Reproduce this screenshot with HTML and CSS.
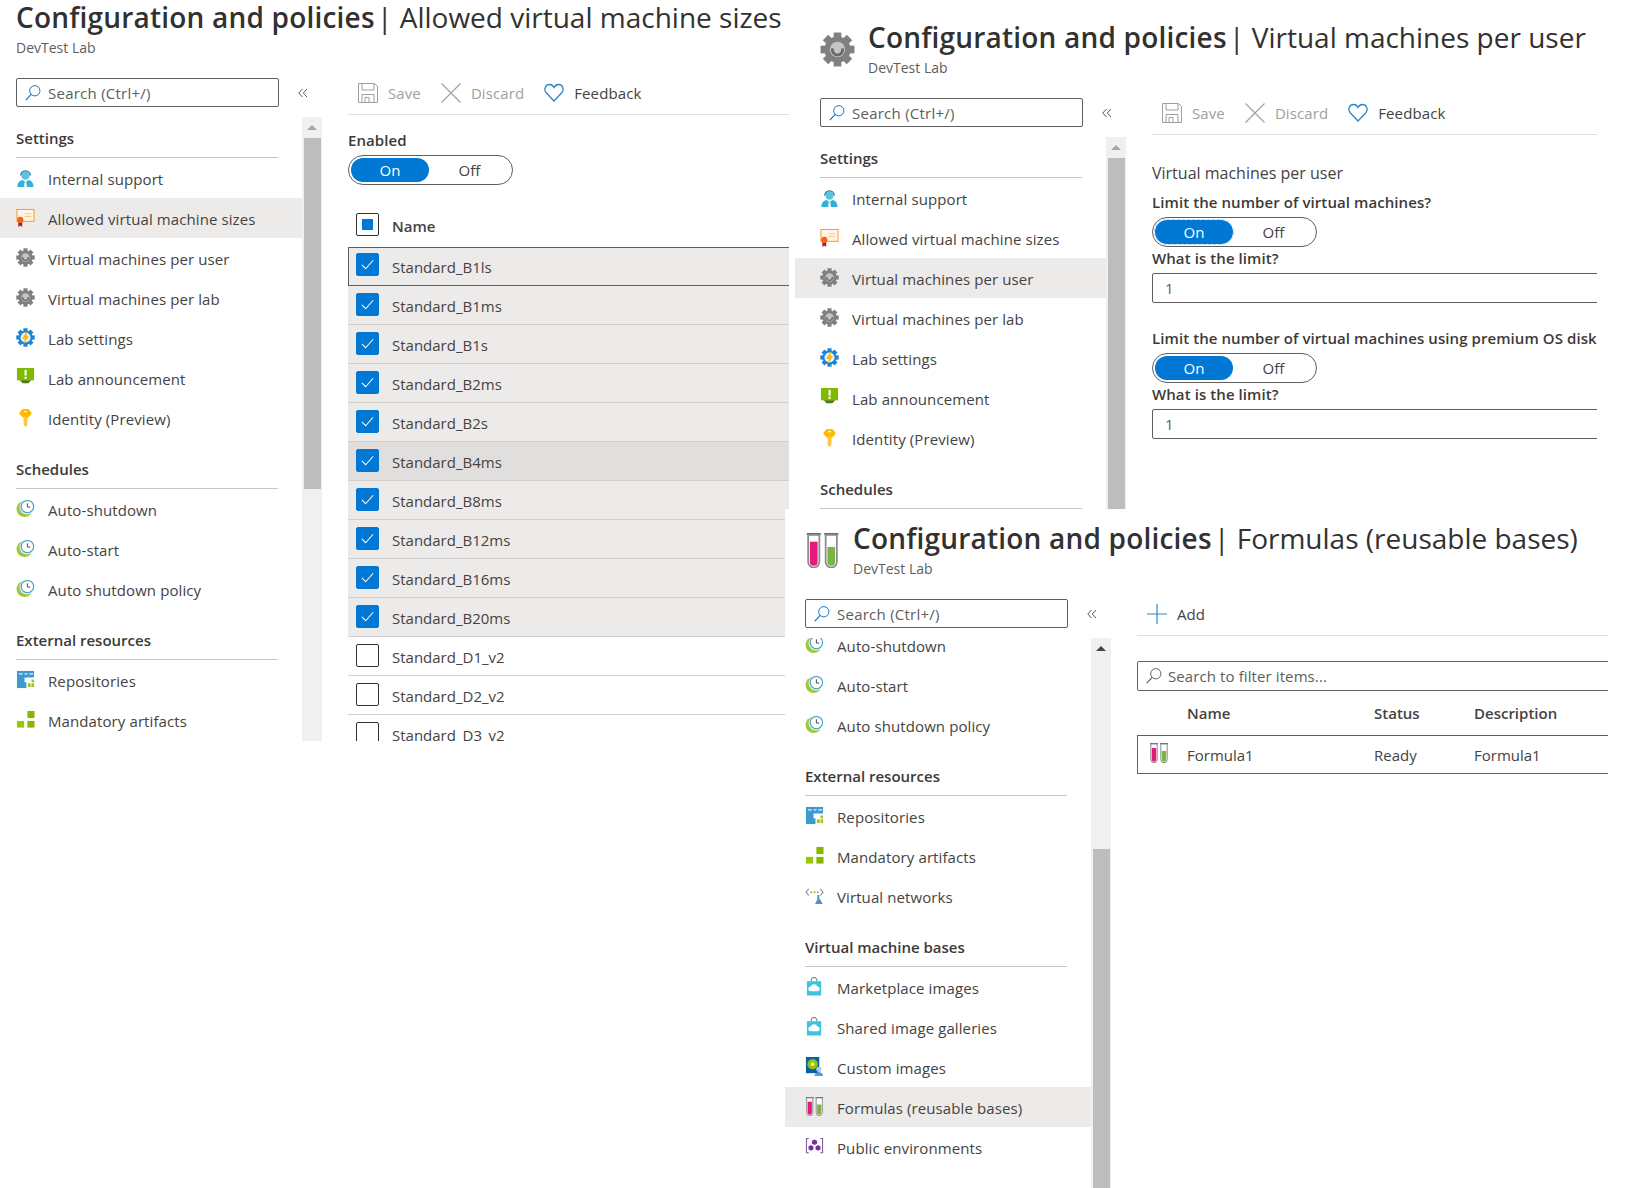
FILE: index.html
```html
<!DOCTYPE html>
<html lang="en">
<head>
    <meta charset="UTF-8">
    <meta name="viewport" content="width=device-width, initial-scale=1.0">
    <title>Configuration and policies</title>
    <link rel="stylesheet" href="styles.css">
</head>
<body>
    <!-- Shared icons -->
    <svg class="icon-defs" aria-hidden="true">
        <symbol id="i-search" viewBox="0 0 20 20"><circle cx="12" cy="7.5" r="5.7" fill="none" stroke="currentColor" stroke-width="1.1"/><path d="M8 11.5 2 18" fill="none" stroke="currentColor" stroke-width="1.3"/></symbol>
        <symbol id="i-support" viewBox="0 0 20 20"><path d="M5 8a5 5 0 0 1 10 0" fill="none" stroke="#1b6ea8" stroke-width="1.4"/><circle cx="10" cy="8" r="4.4" fill="#59c3e6"/><path d="M1.500 20c0-5 2.500-7 5.500-7.500l3 2.500 3-2.500c3 .5 5.500 2.500 5.500 7.500z" fill="#32b1d6"/><path d="M9 15h2l.5 5h-3z" fill="#e8f7fc"/></symbol>
        <symbol id="i-cert" viewBox="0 0 20 20"><rect x="1" y="1.500" width="18" height="12.500" fill="#fff4e6" stroke="#f7941d"/><path d="M9 6h7M9 9h7" stroke="#f9c78d" stroke-width="1.200"/><path d="M2.500 14v6l2-1.500 2 1.500v-6z" fill="#b5121b"/><circle cx="4.500" cy="12.500" r="3.300" fill="#f0641e"/></symbol>
        <symbol id="i-gear" viewBox="0 0 32 32">
            <g transform="translate(16 16)" fill="#808080">
                <circle r="12"/>
                <rect x="-3.500" y="-15.500" width="7" height="6"/>
                <rect x="-3.500" y="-15.500" width="7" height="6" transform="rotate(45)"/>
                <rect x="-3.500" y="-15.500" width="7" height="6" transform="rotate(90)"/>
                <rect x="-3.500" y="-15.500" width="7" height="6" transform="rotate(135)"/>
                <rect x="-3.500" y="-15.500" width="7" height="6" transform="rotate(180)"/>
                <rect x="-3.500" y="-15.500" width="7" height="6" transform="rotate(225)"/>
                <rect x="-3.500" y="-15.500" width="7" height="6" transform="rotate(270)"/>
                <rect x="-3.500" y="-15.500" width="7" height="6" transform="rotate(315)"/>
                <circle r="7" fill="#c4c4c4"/>
                <path d="M-4.500 -1a4.700 4.700 0 1 0 9 0" fill="none" stroke="#6a6a6a" stroke-width="2.600"/>
            </g>
        </symbol>
        <symbol id="i-labgear" viewBox="0 0 32 32">
            <g transform="translate(16 16)" fill="#1b84d6">
                <circle r="12"/>
                <rect x="-3.500" y="-15.500" width="7" height="6"/>
                <rect x="-3.500" y="-15.500" width="7" height="6" transform="rotate(45)"/>
                <rect x="-3.500" y="-15.500" width="7" height="6" transform="rotate(90)"/>
                <rect x="-3.500" y="-15.500" width="7" height="6" transform="rotate(135)"/>
                <rect x="-3.500" y="-15.500" width="7" height="6" transform="rotate(180)"/>
                <rect x="-3.500" y="-15.500" width="7" height="6" transform="rotate(225)"/>
                <rect x="-3.500" y="-15.500" width="7" height="6" transform="rotate(270)"/>
                <rect x="-3.500" y="-15.500" width="7" height="6" transform="rotate(315)"/>
                <circle r="8.500" fill="#e3f1fb"/>
                <path d="M3-11-6 2h5l-2 9 9-13H2z" fill="#fbb80f"/>
            </g>
        </symbol>
        <symbol id="i-announce" viewBox="0 0 20 20"><rect x="1" y="0" width="18" height="13" fill="#7fba00"/><path d="M4 13h12l-3 3h-6z" fill="#4f7a0a"/><rect x="9" y="2" width="2.200" height="6" fill="#fff"/><rect x="9" y="9.200" width="2.200" height="2.200" fill="#fff"/></symbol>
        <symbol id="i-key" viewBox="0 0 20 20"><path d="M7 1h6l3 3.500v2L13 10H7L4 6.500v-2z" fill="#ffb900"/><path d="M8 9h4v9l-2 2-2-2z" fill="#ffc83d"/><rect x="8.500" y="3" width="3" height="1.500" fill="#fff3c4"/></symbol>
        <symbol id="i-clock" viewBox="0 0 20 20"><circle cx="9" cy="10.500" r="8.500" fill="#a4c63c"/><circle cx="11.500" cy="8.500" r="7.800" fill="#d7f0f6"/><circle cx="12" cy="8" r="6.500" fill="#fff" stroke="#3999c6" stroke-width="1.100"/><path d="M12 4.500V8.500H15" fill="none" stroke="#444" stroke-width="1"/></symbol>
        <symbol id="i-repo" viewBox="0 0 20 20"><rect x="1" y="1" width="18" height="18" fill="#3c9ad1"/><path d="M3 4h4M9 4h3M14 4h4" stroke="#dff1fa" stroke-width="1.300"/><path d="M9 8h10v11h-8v-6H9z" fill="#fff"/><rect x="12.500" y="14" width="3" height="4" fill="#a0c520"/><rect x="16.300" y="14" width="2.700" height="4" fill="#a0c520"/><rect x="16.300" y="10" width="2.700" height="3" fill="#a0c520"/></symbol>
        <symbol id="i-artifact" viewBox="0 0 20 20"><rect x="12" y="1" width="7.500" height="7.500" fill="#86b800"/><rect x="1" y="11.500" width="7.500" height="7" fill="#9bc800"/><rect x="12" y="11.500" width="7.500" height="7" fill="#86b800"/></symbol>
        <symbol id="i-vnet" viewBox="0 0 20 20"><path d="M4 3 1 6.500 4 10M16 3l3 3.500L16 10" fill="none" stroke="#7a8c9a" stroke-width="1.100"/><circle cx="6.500" cy="6.500" r="1" fill="#7fba00"/><circle cx="10" cy="6.500" r="1" fill="#7fba00"/><circle cx="13.500" cy="6.500" r="1" fill="#7fba00"/><path d="M14 9.500v5" stroke="#3999c6" stroke-width="2"/><path d="M10.500 19l2.500-5h3l2.500 5z" fill="#5a8fc4"/></symbol>
        <symbol id="i-bag" viewBox="0 0 20 20"><path d="M6.500 5V3.500a3 3 0 0 1 6 0V5" fill="none" stroke="#4d6f7d" stroke-width="1"/><rect x="2" y="4.500" width="15" height="15" fill="#3cc5dc"/><path d="M6 15a2.500 2.500 0 0 1 0-5 3.700 3.700 0 0 1 7 0 2.500 2.500 0 0 1 0 5z" fill="#fff"/></symbol>
        <symbol id="i-custom" viewBox="0 0 20 20"><rect x="1" y="0" width="14" height="17" fill="#0a5ea8"/><circle cx="8" cy="7.500" r="5.500" fill="#8cc21f"/><circle cx="8" cy="7.500" r="2" fill="#fff04a"/><circle cx="14.500" cy="13" r="2.700" fill="#a8c9ea"/><path d="M10 20c0-3 2-4 4.500-4s4.500 1 4.500 4z" fill="#5f97d3"/></symbol>
        <symbol id="i-tubes" viewBox="0 0 20 20"><path d="M1 .6h8M11 .6h8" stroke="#6a6a6a" stroke-width="1.200"/><path d="M1.800 1h6.400v15.500a3.200 3.200 0 0 1-6.400 0z" fill="#fff" stroke="#8b8b8b"/><path d="M2.800 5h4.400v11.500a2.200 2.200 0 0 1-4.400 0z" fill="#e5197d"/><path d="M11.800 1h6.400v15.500a3.200 3.200 0 0 1-6.400 0z" fill="#fff" stroke="#8b8b8b"/><path d="M12.800 8h4.400v8.500a2.200 2.200 0 0 1-4.400 0z" fill="#7cb342"/></symbol>
        <symbol id="i-public" viewBox="0 0 20 20"><path d="M4 1.500H1.500v15H4M16 1.500h2.500v15H16" fill="none" stroke="#7a5a9e" stroke-width="1.100"/><path d="M10 2.500l2.600 1.500v3L10 8.500 7.400 7V4z" fill="#7b2d9e"/><path d="M6.300 8.500l2.600 1.500v3l-2.600 1.500L3.700 13v-3z" fill="#7b2d9e"/><path d="M13.700 8.500l2.600 1.500v3l-2.600 1.500-2.600-1.500v-3z" fill="#7b2d9e"/></symbol>
        <symbol id="i-save" viewBox="0 0 20 20"><path d="M.5.500h16l3 3v16H.5z M4 .5v6.500h12V.5 M4 19.500V11.500h12v8 M7 19.500v-5h4v5" fill="none" stroke="#a19f9d"/></symbol>
        <symbol id="i-discard" viewBox="0 0 20 20"><path d="M.5.500l19 19M19.500.500l-19 19" fill="none" stroke="#a19f9d" stroke-width="1.100"/></symbol>
        <symbol id="i-heart" viewBox="0 0 20 20"><path d="M10 18 2 9.500C-.5 6 1.500 1.500 5.500 1.500c2 0 3.500 1 4.500 3 1-2 2.500-3 4.500-3 4 0 6 4.500 3.500 8z" fill="none" stroke="#2b88c8" stroke-width="1.300"/></symbol>
        <symbol id="i-plus" viewBox="0 0 20 20"><path d="M10 0v20M0 10h20" fill="none" stroke="#2b8ad0" stroke-width="1.200"/></symbol>
        <symbol id="i-check" viewBox="0 0 16 16"><path d="M2 8.500 6 12.500 14 3.500" fill="none" stroke="#fff" stroke-width="1.100"/></symbol>
        <symbol id="i-collapse" viewBox="0 0 10 10"><path d="M4.500 1 .8 5l3.700 4M9 1 5.300 5 9 9" fill="none" stroke="#484644" stroke-width=".9"/></symbol>
    </svg>

    <div class="desktop">

        <!-- Allowed virtual machine sizes -->
        <section class="window window-sizes">
            <header class="blade-head">
                <div>
                    <h1 class="blade-title"><b>Configuration and policies</b> | Allowed virtual machine sizes</h1>
                    <p class="blade-sub">DevTest Lab</p>
                </div>
            </header>
            <div class="blade-body">
                <aside class="sidebar">
                    <div class="side-search">
                        <div class="search-box"><svg class="search-icon"><use href="#i-search"/></svg>Search (Ctrl+/)</div>
                        <svg class="collapse"><use href="#i-collapse"/></svg>
                    </div>
                    <div class="side-pane">
                        <nav class="menu">
                            <h2 class="menu-head">Settings</h2>
                            <a class="menu-item"><svg class="menu-icon"><use href="#i-support"/></svg>Internal support</a>
                            <a class="menu-item active"><svg class="menu-icon"><use href="#i-cert"/></svg>Allowed virtual machine sizes</a>
                            <a class="menu-item"><svg class="menu-icon"><use href="#i-gear"/></svg>Virtual machines per user</a>
                            <a class="menu-item"><svg class="menu-icon"><use href="#i-gear"/></svg>Virtual machines per lab</a>
                            <a class="menu-item"><svg class="menu-icon"><use href="#i-labgear"/></svg>Lab settings</a>
                            <a class="menu-item"><svg class="menu-icon"><use href="#i-announce"/></svg>Lab announcement</a>
                            <a class="menu-item"><svg class="menu-icon"><use href="#i-key"/></svg>Identity (Preview)</a>
                            <h2 class="menu-head">Schedules</h2>
                            <a class="menu-item"><svg class="menu-icon"><use href="#i-clock"/></svg>Auto-shutdown</a>
                            <a class="menu-item"><svg class="menu-icon"><use href="#i-clock"/></svg>Auto-start</a>
                            <a class="menu-item"><svg class="menu-icon"><use href="#i-clock"/></svg>Auto shutdown policy</a>
                            <h2 class="menu-head">External resources</h2>
                            <a class="menu-item"><svg class="menu-icon"><use href="#i-repo"/></svg>Repositories</a>
                            <a class="menu-item"><svg class="menu-icon"><use href="#i-artifact"/></svg>Mandatory artifacts</a>
                        </nav>
                        <div class="scrollbar"><span class="scroll-up"></span><span class="scroll-thumb"></span></div>
                    </div>
                </aside>
                <main class="content">
                    <div class="toolbar">
                        <span class="tool disabled"><svg class="tool-icon"><use href="#i-save"/></svg>Save</span>
                        <span class="tool disabled"><svg class="tool-icon"><use href="#i-discard"/></svg>Discard</span>
                        <span class="tool"><svg class="tool-icon"><use href="#i-heart"/></svg>Feedback</span>
                    </div>
                    <label class="field-label enabled-label">Enabled</label>
                    <div class="toggle"><span class="toggle-on">On</span><span class="toggle-off">Off</span></div>
                    <div class="size-head"><span class="checkbox partial"></span>Name</div>
                    <div class="size-row selected focused"><span class="checkbox checked"><svg><use href="#i-check"/></svg></span>Standard_B1ls</div>
                    <div class="size-row selected"><span class="checkbox checked"><svg><use href="#i-check"/></svg></span>Standard_B1ms</div>
                    <div class="size-row selected"><span class="checkbox checked"><svg><use href="#i-check"/></svg></span>Standard_B1s</div>
                    <div class="size-row selected"><span class="checkbox checked"><svg><use href="#i-check"/></svg></span>Standard_B2ms</div>
                    <div class="size-row selected"><span class="checkbox checked"><svg><use href="#i-check"/></svg></span>Standard_B2s</div>
                    <div class="size-row hovered"><span class="checkbox checked"><svg><use href="#i-check"/></svg></span>Standard_B4ms</div>
                    <div class="size-row selected"><span class="checkbox checked"><svg><use href="#i-check"/></svg></span>Standard_B8ms</div>
                    <div class="size-row selected"><span class="checkbox checked"><svg><use href="#i-check"/></svg></span>Standard_B12ms</div>
                    <div class="size-row selected"><span class="checkbox checked"><svg><use href="#i-check"/></svg></span>Standard_B16ms</div>
                    <div class="size-row selected"><span class="checkbox checked"><svg><use href="#i-check"/></svg></span>Standard_B20ms</div>
                    <div class="size-row"><span class="checkbox"></span>Standard_D1_v2</div>
                    <div class="size-row"><span class="checkbox"></span>Standard_D2_v2</div>
                    <div class="size-row"><span class="checkbox"></span>Standard_D3_v2</div>
                </main>
            </div>
        </section>

        <!-- Virtual machines per user -->
        <section class="window window-user">
            <header class="blade-head">
                <svg class="blade-icon"><use href="#i-gear"/></svg>
                <div>
                    <h1 class="blade-title"><b>Configuration and policies</b> | Virtual machines per user</h1>
                    <p class="blade-sub">DevTest Lab</p>
                </div>
            </header>
            <div class="blade-body">
                <aside class="sidebar">
                    <div class="side-search">
                        <div class="search-box"><svg class="search-icon"><use href="#i-search"/></svg>Search (Ctrl+/)</div>
                        <svg class="collapse"><use href="#i-collapse"/></svg>
                    </div>
                    <div class="side-pane">
                        <nav class="menu">
                            <h2 class="menu-head">Settings</h2>
                            <a class="menu-item"><svg class="menu-icon"><use href="#i-support"/></svg>Internal support</a>
                            <a class="menu-item"><svg class="menu-icon"><use href="#i-cert"/></svg>Allowed virtual machine sizes</a>
                            <a class="menu-item active"><svg class="menu-icon"><use href="#i-gear"/></svg>Virtual machines per user</a>
                            <a class="menu-item"><svg class="menu-icon"><use href="#i-gear"/></svg>Virtual machines per lab</a>
                            <a class="menu-item"><svg class="menu-icon"><use href="#i-labgear"/></svg>Lab settings</a>
                            <a class="menu-item"><svg class="menu-icon"><use href="#i-announce"/></svg>Lab announcement</a>
                            <a class="menu-item"><svg class="menu-icon"><use href="#i-key"/></svg>Identity (Preview)</a>
                            <h2 class="menu-head">Schedules</h2>
                        </nav>
                        <div class="scrollbar"><span class="scroll-up"></span><span class="scroll-thumb"></span></div>
                    </div>
                </aside>
                <main class="content">
                    <div class="toolbar">
                        <span class="tool disabled"><svg class="tool-icon"><use href="#i-save"/></svg>Save</span>
                        <span class="tool disabled"><svg class="tool-icon"><use href="#i-discard"/></svg>Discard</span>
                        <span class="tool"><svg class="tool-icon"><use href="#i-heart"/></svg>Feedback</span>
                    </div>
                    <h3 class="form-title">Virtual machines per user</h3>
                    <label class="field-label">Limit the number of virtual machines?</label>
                    <div class="toggle"><span class="toggle-on dashed">On</span><span class="toggle-off">Off</span></div>
                    <label class="field-label limit-label">What is the limit?</label>
                    <div class="input-box">1</div>
                    <label class="field-label premium-label">Limit the number of virtual machines using premium OS disk</label>
                    <div class="toggle"><span class="toggle-on">On</span><span class="toggle-off">Off</span></div>
                    <label class="field-label limit-label">What is the limit?</label>
                    <div class="input-box">1</div>
                </main>
            </div>
        </section>

        <!-- Formulas (reusable bases) -->
        <section class="window window-formulas">
            <header class="blade-head">
                <svg class="blade-icon"><use href="#i-tubes"/></svg>
                <div>
                    <h1 class="blade-title"><b>Configuration and policies</b> | Formulas (reusable bases)</h1>
                    <p class="blade-sub">DevTest Lab</p>
                </div>
            </header>
            <div class="blade-body">
                <aside class="sidebar">
                    <div class="side-search">
                        <div class="search-box"><svg class="search-icon"><use href="#i-search"/></svg>Search (Ctrl+/)</div>
                        <svg class="collapse"><use href="#i-collapse"/></svg>
                    </div>
                    <div class="side-pane">
                        <nav class="menu">
                            <a class="menu-item"><svg class="menu-icon"><use href="#i-clock"/></svg>Auto-shutdown</a>
                            <a class="menu-item"><svg class="menu-icon"><use href="#i-clock"/></svg>Auto-start</a>
                            <a class="menu-item"><svg class="menu-icon"><use href="#i-clock"/></svg>Auto shutdown policy</a>
                            <h2 class="menu-head">External resources</h2>
                            <a class="menu-item"><svg class="menu-icon"><use href="#i-repo"/></svg>Repositories</a>
                            <a class="menu-item"><svg class="menu-icon"><use href="#i-artifact"/></svg>Mandatory artifacts</a>
                            <a class="menu-item"><svg class="menu-icon"><use href="#i-vnet"/></svg>Virtual networks</a>
                            <h2 class="menu-head">Virtual machine bases</h2>
                            <a class="menu-item"><svg class="menu-icon"><use href="#i-bag"/></svg>Marketplace images</a>
                            <a class="menu-item"><svg class="menu-icon"><use href="#i-bag"/></svg>Shared image galleries</a>
                            <a class="menu-item"><svg class="menu-icon"><use href="#i-custom"/></svg>Custom images</a>
                            <a class="menu-item active"><svg class="menu-icon"><use href="#i-tubes"/></svg>Formulas (reusable bases)</a>
                            <a class="menu-item"><svg class="menu-icon"><use href="#i-public"/></svg>Public environments</a>
                        </nav>
                        <div class="scrollbar"><span class="scroll-up"></span><span class="scroll-thumb"></span></div>
                    </div>
                </aside>
                <main class="content">
                    <div class="toolbar">
                        <span class="tool"><svg class="tool-icon"><use href="#i-plus"/></svg>Add</span>
                    </div>
                    <div class="input-box filter-box"><svg class="search-icon"><use href="#i-search"/></svg>Search to filter items...</div>
                    <div class="formula-grid formula-head">
                        <span></span><span>Name</span><span>Status</span><span>Description</span>
                    </div>
                    <div class="formula-grid formula-row">
                        <svg class="formula-icon"><use href="#i-tubes"/></svg><span>Formula1</span><span>Ready</span><span>Formula1</span>
                    </div>
                </main>
            </div>
        </section>

    </div>
</body>
</html>
```

FILE: styles.css
```css
* {
    box-sizing: border-box;
}
body {
    margin: 0;
    background-color: #fff;
    color: #444342;
    font-family: "Open Sans", "Noto Sans", Arial, sans-serif;
    font-size: 15px;
    line-height: 20px;
}
.icon-defs {
    position: absolute;
    width: 0;
    height: 0;
}
.desktop {
    position: relative;
    width: 1630px;
    height: 1188px;
    overflow: hidden;
}

/* The three captures lie on top of each other */
.window {
    position: absolute;
    display: flex;
    flex-direction: column;
    background-color: #fff;
    overflow: hidden;
}
.window-sizes {
    --gutter: 16px;
    left: 0;
    top: 0;
    width: 789px;
    height: 741px;
}
.window-user {
    --gutter: 25px;
    left: 795px;
    top: 0;
    width: 802px;
    height: 520px;
    padding-top: 20px;
}
.window-formulas {
    --gutter: 20px;
    left: 785px;
    top: 509px;
    width: 823px;
    height: 679px;
    padding-top: 12px;
}

/* Blade header */
.blade-head {
    display: flex;
    gap: 13px;
    height: 57px;
    margin-bottom: 21px;
    padding-left: var(--gutter);
    flex-shrink: 0;
}
.blade-icon {
    width: 35px;
    height: 35px;
    margin-top: 12px;
}
.blade-title {
    margin: 0;
    font-size: 28px;
    font-weight: 400;
    line-height: 34px;
    color: #323130;
    white-space: nowrap;
}
.blade-title b {
    margin-right: -5px;
    font-weight: 600;
    letter-spacing: .2px;
}
.blade-sub {
    margin: 4px 0 0;
    font-size: 14px;
    color: #605e5c;
}
.blade-body {
    display: flex;
    gap: 26px;
    flex: 1;
    min-height: 0;
}

/* Left menu */
.sidebar {
    display: flex;
    flex-direction: column;
    flex: 0 0 calc(var(--gutter) + 306px);
}
.side-search {
    display: flex;
    align-items: center;
    height: 29px;
    margin-bottom: 10px;
    padding-left: var(--gutter);
}
.search-box {
    display: flex;
    align-items: center;
    width: 263px;
    height: 29px;
    padding-left: 7px;
    border: 1px solid #605e5c;
    border-radius: 2px;
    color: #605e5c;
    letter-spacing: .25px;
}
.search-icon {
    width: 18px;
    height: 18px;
    margin-right: 6px;
    color: #0078d4;
}
.collapse {
    width: 10px;
    height: 10px;
    margin-left: 19px;
}
.side-pane {
    display: flex;
    flex: 1;
    min-height: 0;
}
.menu {
    flex: 1;
    overflow: hidden;
}
.window-formulas .menu-item:first-child {
    margin-top: -13px;
}
.menu-head {
    width: 262px;
    height: 41px;
    margin: 10px 0 0 var(--gutter);
    padding-top: 11px;
    border-bottom: 1px solid #c8c6c4;
    font-size: 15px;
    font-weight: 600;
    color: #3b3a39;
}
.menu-head:first-child {
    margin-top: 0;
}
.menu-item {
    display: flex;
    align-items: center;
    gap: 13px;
    height: 40px;
    padding: 2px 0 0 var(--gutter);
    letter-spacing: .1px;
    line-height: 16px;
}
.menu-item.active {
    background-color: #edebe9;
}
.menu-icon {
    width: 19px;
    height: 19px;
    margin-top: -3px;
}
.scrollbar {
    display: flex;
    flex-direction: column;
    align-items: center;
    flex: 0 0 20px;
    background-color: #f0f0f0;
}
.scroll-up {
    width: 0;
    height: 0;
    margin-top: 8px;
    border: 5px solid transparent;
    border-top: 0;
    border-bottom: 5px solid #a6a6a6;
}
.scroll-thumb {
    width: 17px;
    height: 351px;
    margin-top: 8px;
    background-color: #bdbdbd;
}
.window-formulas .scroll-up {
    border-bottom-color: #444;
}
.window-formulas .scroll-thumb {
    height: 340px;
    margin-top: 198px;
}

/* Right side */
.content {
    flex: 1;
    min-width: 0;
    overflow: hidden;
}
.toolbar {
    display: flex;
    align-items: center;
    gap: 20px;
    height: 37px;
    padding: 0 0 6px 10px;
    border-bottom: 1px solid #e1dfdd;
    letter-spacing: .1px;
}
.tool {
    display: flex;
    align-items: center;
    gap: 10px;
}
.tool.disabled {
    color: #a19f9d;
}
.tool-icon {
    width: 20px;
    height: 20px;
}
.field-label {
    display: block;
    font-weight: 600;
    color: #3b3a39;
    letter-spacing: .08px;
}
.enabled-label {
    margin-top: 15px;
}
.toggle {
    display: flex;
    align-items: center;
    width: 165px;
    height: 30px;
    margin-top: 5px;
    padding: 0 2px;
    border: 1px solid #605e5c;
    border-radius: 15px;
}
.toggle-on {
    width: 78px;
    height: 24px;
    border-radius: 12px;
    background-color: #0078d4;
    color: #fff;
    line-height: 24px;
    text-align: center;
}
.toggle-on.dashed {
    outline: 1px dashed #a9d5f3;
}
.toggle-off {
    flex: 1;
    text-align: center;
}

/* Sizes table */
.size-head {
    display: flex;
    align-items: center;
    gap: 13px;
    height: 42px;
    margin-top: 20px;
    padding-left: 8px;
    font-weight: 600;
}
.size-row {
    display: flex;
    align-items: center;
    gap: 13px;
    height: 39px;
    padding: 2px 0 0 8px;
    border-bottom: 1px solid #d2d0ce;
}
.size-row.selected {
    background-color: #edebe9;
}
.size-row.hovered {
    background-color: #e1dfdd;
}
.size-row.focused {
    border: 1px solid #605e5c;
    border-right: 0;
    padding: 0 0 0 7px;
}
.checkbox {
    display: flex;
    align-items: center;
    justify-content: center;
    flex-shrink: 0;
    width: 23px;
    height: 23px;
    margin-top: -4px;
    border: 1px solid #323130;
    border-radius: 2px;
    background-color: #fff;
}
.checkbox.checked {
    border-color: #0078d4;
    background-color: #0078d4;
}
.checkbox.checked svg {
    width: 15px;
    height: 15px;
}
.checkbox.partial::before {
    content: "";
    width: 11px;
    height: 11px;
    background-color: #0078d4;
}

/* Per user form */
.form-title {
    margin: 28px 0 0;
    font-size: 16px;
    font-weight: 400;
    line-height: 20px;
}
.form-title + .field-label {
    margin-top: 9px;
}
.limit-label {
    margin-top: 1px;
}
.input-box {
    display: flex;
    align-items: center;
    width: calc(100% + 10px);
    height: 30px;
    margin-top: 5px;
    padding-left: 12px;
    border: 1px solid #605e5c;
    border-radius: 2px;
    color: #605e5c;
}
.premium-label {
    margin-top: 25px;
    white-space: nowrap;
}

/* Formula list */
.input-box.filter-box {
    margin-top: 25px;
    padding-left: 7px;
    letter-spacing: .1px;
}
.filter-box .search-icon {
    margin-right: 5px;
    color: #605e5c;
}
.formula-grid {
    display: grid;
    grid-template-columns: 50px 187px 100px 1fr;
    align-items: center;
}
.formula-head {
    height: 44px;
    font-weight: 600;
}
.formula-row {
    width: calc(100% + 10px);
    height: 39px;
    border: 1px solid #605e5c;
}
.formula-row span {
    margin-left: -1px;
}
.formula-icon {
    width: 20px;
    height: 20px;
    margin: -3px 0 0 11px;
}
```
